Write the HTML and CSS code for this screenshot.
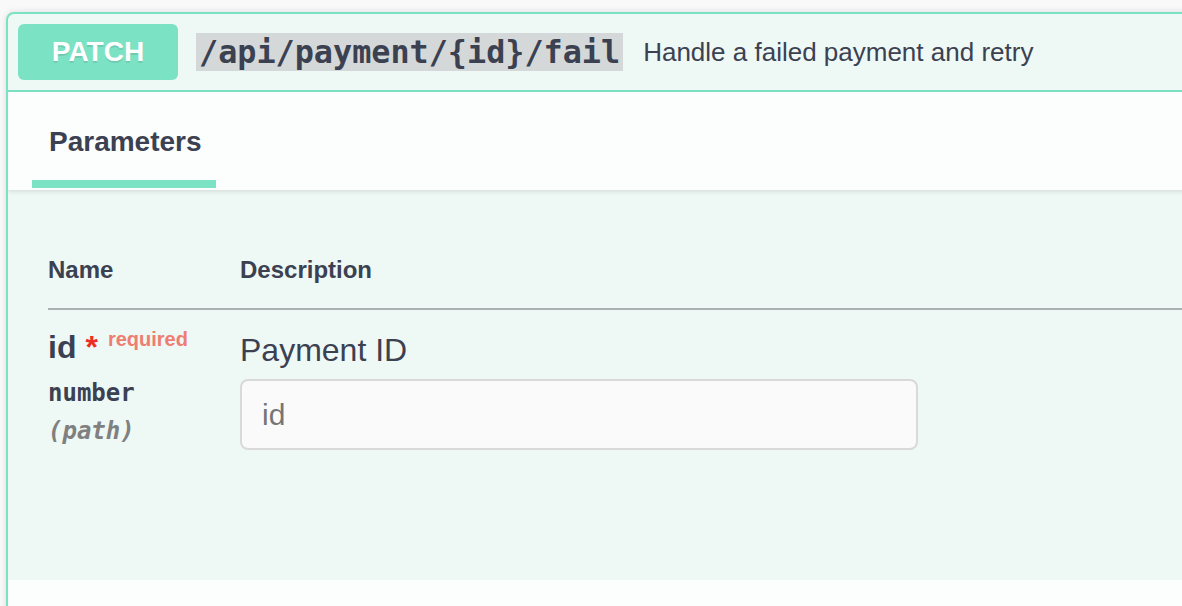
FILE: index.html
```html
<!DOCTYPE html>
<html>
<head>
<meta charset="utf-8">
<link rel="stylesheet" href="styles.css">
</head>
<body>
<div class="opblock">
  <div class="summary">
    <span class="method">PATCH</span>
    <span class="path">/api/payment/{id}/fail</span>
    <span class="summary-desc">Handle a failed payment and retry</span>
  </div>
  <div class="section-header">
    <div class="tab">
      <h4 class="tab-title">Parameters</h4>
      <div class="tab-underline"></div>
    </div>
  </div>
  <div class="params">
    <div class="params-head">
      <div class="col-name">Name</div>
      <div class="col-desc">Description</div>
    </div>
    <div class="param-row">
      <div class="col-name">
        <div class="param-name">id<span class="star">*</span><span class="required">required</span></div>
        <div class="param-type">number</div>
        <div class="param-in">(path)</div>
      </div>
      <div class="col-desc">
        <div class="param-desc">Payment ID</div>
        <input class="param-input" type="text" placeholder="id">
      </div>
    </div>
  </div>
  <div class="next-header"></div>
</div>
</body>
</html>
```

FILE: styles.css
```css
html, body {
  margin: 0;
  padding: 0;
}
body {
  background: #f9f9f9;
  overflow: hidden;
  padding: 12px 0 0 6px;
  font-family: "Liberation Sans", Arial, sans-serif;
  color: #3b4151;
}
.opblock {
  width: 1200px;
  border: 2px solid #7ce2c4;
  border-radius: 8px;
  background: #eef8f5;
  box-shadow: 0 0 6px rgba(0, 0, 0, 0.12);
  overflow: hidden;
}
.summary {
  height: 76px;
  display: flex;
  align-items: center;
  padding: 0 10px;
  border-bottom: 2px solid #7ce2c4;
}
.method {
  width: 160px;
  height: 56px;
  border-radius: 6px;
  background: #7ce2c4;
  color: #fff;
  font-weight: bold;
  font-size: 28px;
  line-height: 56px;
  text-align: center;
  text-shadow: 0 2px 0 rgba(0, 0, 0, 0.1);
}
.path {
  margin-left: 18px;
  background: #d5d8d8;
  font-family: "DejaVu Sans Mono", monospace;
  font-weight: bold;
  font-size: 31.8px;
  line-height: 38px;
  padding: 0 3px;
  color: #3b4151;
}
.summary-desc {
  margin-left: 20px;
  font-size: 26px;
}
.section-header {
  height: 98px;
  background: rgba(255, 255, 255, 0.8);
  box-shadow: 0 2px 4px rgba(0, 0, 0, 0.1);
  position: relative;
}
.tab {
  margin-left: 24px;
  width: 184px;
  padding-top: 32px;
}
.tab-title {
  margin: 0;
  padding-left: 17px;
  font-size: 28px;
  line-height: 36px;
  font-weight: bold;
}
.tab-underline {
  margin-top: 20px;
  height: 8px;
  background: #7ce2c4;
}
.params {
  height: 326px;
  padding: 64px 0 0 40px;
}
.params-head {
  display: flex;
  font-size: 24px;
  line-height: 32px;
  font-weight: bold;
  padding-bottom: 22px;
  border-bottom: 2px solid #abb1b3;
}
.col-name {
  width: 192px;
  flex: none;
}
.col-desc {
  flex: 1;
}
.param-row {
  display: flex;
  padding-top: 17px;
}
.param-name {
  font-size: 32px;
  line-height: 40px;
  font-weight: bold;
}
.star {
  color: #ee2d25;
  margin-left: 9px;
}
.required {
  position: relative;
  top: -12px;
  font-size: 20px;
  color: #ee7d72;
  padding-left: 10px;
}
.param-type {
  font-family: "DejaVu Sans Mono", monospace;
  font-weight: bold;
  font-size: 24px;
  line-height: 28px;
  padding-top: 8px;
}
.param-in {
  font-family: "DejaVu Sans Mono", monospace;
  font-weight: bold;
  font-style: italic;
  font-size: 24px;
  line-height: 28px;
  margin-top: 10px;
  color: #808080;
}
.param-desc {
  font-size: 32px;
  line-height: 40px;
  padding-top: 3px;
}
.param-input {
  display: block;
  margin-top: 9px;
  box-sizing: border-box;
  width: 678px;
  height: 71px;
  border: 2px solid #d9d9d9;
  border-radius: 8px;
  background: #fafafa;
  padding: 0 20px;
  font-family: "Liberation Sans", Arial, sans-serif;
  font-size: 30px;
  color: #3b4151;
  outline: none;
}
.param-input::placeholder {
  color: #757575;
}
.next-header {
  height: 40px;
  background: rgba(255, 255, 255, 0.8);
}
```
